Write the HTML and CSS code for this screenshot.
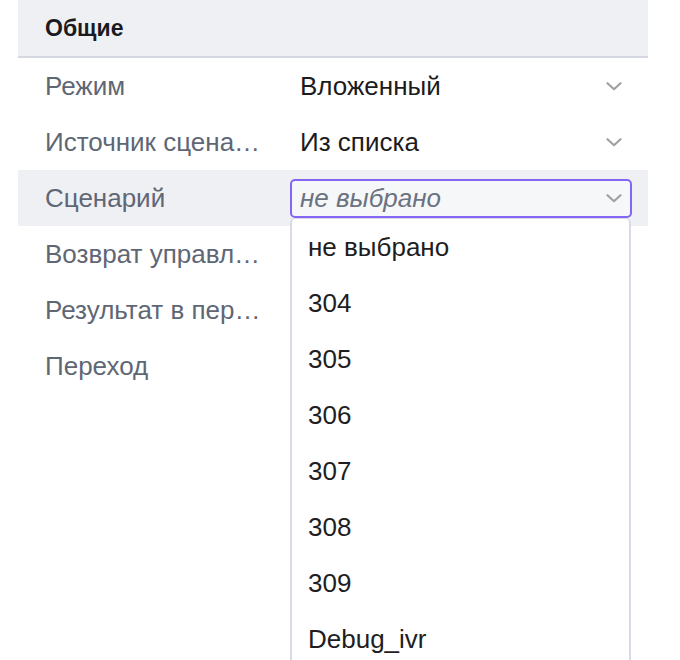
FILE: index.html
```html
<!DOCTYPE html>
<html lang="ru">
<head>
<meta charset="utf-8">
<title>Общие</title>
<link rel="stylesheet" href="styles.css">
</head>
<body>
<div class="panel">
  <div class="section-head">Общие</div>
  <div class="row">
    <div class="label">Режим</div>
    <div class="value"><span class="value-text">Вложенный</span><svg class="chev" width="16" height="9" viewBox="0 0 16 9"><polyline points="1.5,1.2 8,7.2 14.5,1.2"/></svg></div>
  </div>
  <div class="row">
    <div class="label">Источник сценария</div>
    <div class="value"><span class="value-text">Из списка</span><svg class="chev" width="16" height="9" viewBox="0 0 16 9"><polyline points="1.5,1.2 8,7.2 14.5,1.2"/></svg></div>
  </div>
  <div class="row row-active">
    <div class="label">Сценарий</div>
    <div class="value">
      <div class="select select-open">
        <span class="placeholder">не выбрано</span><svg class="chev" width="16" height="9" viewBox="0 0 16 9"><polyline points="1.5,1.2 8,7.2 14.5,1.2"/></svg>
      </div>
      <ul class="menu">
        <li>не выбрано</li>
        <li>304</li>
        <li>305</li>
        <li>306</li>
        <li>307</li>
        <li>308</li>
        <li>309</li>
        <li>Debug_ivr</li>
      </ul>
    </div>
  </div>
  <div class="row">
    <div class="label">Возврат управления</div>
    <div class="value"></div>
  </div>
  <div class="row">
    <div class="label">Результат в переменную</div>
    <div class="value"></div>
  </div>
  <div class="row">
    <div class="label">Переход</div>
    <div class="value"></div>
  </div>
</div>
</body>
</html>
```

FILE: styles.css
```css
html, body {
  margin: 0;
  padding: 0;
  background: #ffffff;
  overflow: hidden;
  height: 660px;
}

body {
  font-family: "Liberation Sans", Arial, sans-serif;
}

.panel {
  margin-left: 18px;
  width: 630px;
}

.section-head {
  height: 58px;
  box-sizing: border-box;
  padding: 15px 0 0 27px;
  background: #eff0f4;
  border-bottom: 2px solid #d5d8e0;
  font-size: 23px;
  font-weight: bold;
  line-height: 26px;
  color: #1b1b1f;
}

.row {
  display: grid;
  grid-template-columns: 272px 342px;
  height: 56px;
  align-items: center;
}

.row-active {
  background: #eff0f4;
}

.label {
  padding: 0 25px 0 27px;
  font-size: 26px;
  color: #5f6775;
  white-space: nowrap;
  overflow: hidden;
  text-overflow: ellipsis;
}

.value {
  position: relative;
  display: flex;
  align-items: center;
  justify-content: space-between;
  padding: 0 10px;
  height: 56px;
}

.value-text {
  font-size: 26px;
  color: #1c1c20;
}

.chev {
  flex: none;
}

.chev polyline {
  fill: none;
  stroke: #a0a0a5;
  stroke-width: 2.2;
  stroke-linecap: round;
  stroke-linejoin: round;
}

.value:has(.select) {
  padding: 0;
}

.select {
  flex: 1;
  height: 39px;
  box-sizing: border-box;
  display: flex;
  align-items: center;
  justify-content: space-between;
  padding: 0 8px 0 8px;
  background: #f6f7f9;
  border: 2px solid #8466f4;
  border-radius: 5px;
}

.placeholder {
  font-size: 26px;
  font-style: italic;
  color: #6b7280;
}

.menu {
  position: absolute;
  top: 48px;
  left: 0;
  width: 341px;
  box-sizing: border-box;
  margin: 0;
  padding: 0;
  list-style: none;
  background: #ffffff;
  border: 2px solid #d8dbe4;
  border-top-width: 1px;
  border-bottom: none;
  border-radius: 5px 5px 0 0;
  z-index: 2;
}

.menu li {
  height: 56px;
  line-height: 56px;
  padding-left: 16px;
  font-size: 26px;
  color: #1e1e22;
}
```
